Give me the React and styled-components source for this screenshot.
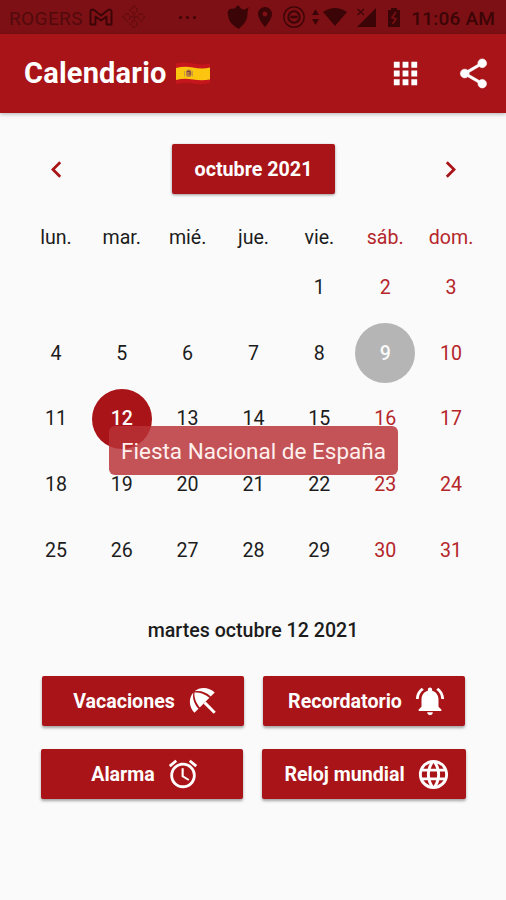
import React from 'react';
import styled, { createGlobalStyle } from 'styled-components';
import {
  MdApps,
  MdShare,
  MdChevronLeft,
  MdChevronRight,
  MdNotificationsActive,
  MdAccessAlarm,
  MdLanguage,
  MdPlace
} from 'react-icons/md';

const red = '#a91418';
const statusInk = '#3b0507';

const GlobalStyle = createGlobalStyle`
  * { box-sizing: border-box; }
  body {
    margin: 0;
    background: #fafafa;
    font-family: Roboto, "Liberation Sans", sans-serif;
  }
`;

const Screen = styled.div`
  display: flex;
  flex-direction: column;
  width: 506px;
  height: 900px;
  overflow: hidden;
  background: #fafafa;
  color: #1c1c1c;
`;

const StatusBar = styled.div`
  display: flex;
  align-items: center;
  height: 34px;
  padding: 0 11px 0 9px;
  background: #7d1014;
  color: ${statusInk};
  svg { display: block; flex: none; }
`;

const Carrier = styled.span`
  flex: none;
  width: 80px;
  padding-top: 2px;
  font-size: 19px;
  letter-spacing: 0.4px;
  color: #520a0d;
`;

const Dots = styled.span`
  display: flex;
  gap: 4px;
  margin-left: 33px;
  i {
    width: 3px;
    height: 3px;
    border-radius: 50%;
    background: ${statusInk};
  }
`;

const Clock = styled.span`
  margin-left: auto;
  padding-top: 2px;
  font-size: 19px;
  font-weight: 500;
  letter-spacing: 0.2px;
  white-space: nowrap;
`;

const SystemIcons = styled.div`
  display: flex;
  flex: none;
  align-items: center;
  margin-left: 30px;
`;

const Gap = styled.span`
  flex: none;
  width: ${props => props.$size}px;
`;

const AppBar = styled.header`
  display: flex;
  align-items: center;
  flex: none;
  height: 79px;
  padding: 0 15.5px 0 24px;
  background: ${red};
  color: #fff;
  box-shadow: 0 1px 4px rgba(0, 0, 0, 0.3);
  svg { display: block; }
`;

const Title = styled.h1`
  margin: 0 8px 2px 0;
  font-size: 29px;
  font-weight: 700;
  letter-spacing: 0.2px;
`;

const Actions = styled.div`
  display: flex;
  align-items: center;
  gap: 32.5px;
  margin-left: auto;
`;

const ShareIcon = styled(MdShare)`
  stroke-width: 0.4;
  path[fill="none"] { stroke: none; }
`;

const MonthBar = styled.div`
  display: flex;
  align-items: center;
  justify-content: space-between;
  height: 50px;
  margin: 31px 39px 0 40px;
  color: ${red};
`;

const MonthButton = styled.div`
  display: flex;
  align-items: center;
  justify-content: center;
  width: 163px;
  height: 50px;
  border-radius: 2px;
  background: ${red};
  color: #fff;
  font-size: 19.7px;
  font-weight: 700;
  box-shadow: 0 1px 3px rgba(0, 0, 0, 0.4);
`;

const Calendar = styled.div`
  position: relative;
  display: grid;
  grid-template-columns: repeat(7, 1fr);
  grid-template-rows: 34.4px repeat(5, 65.8px);
  width: 461px;
  margin: 26px 0 0 23px;
`;

const Weekday = styled.div`
  display: flex;
  align-items: center;
  justify-content: center;
  font-size: 19.6px;
  color: ${props => props.$weekend ? '#b5262b' : 'inherit'};
`;

const Day = styled.div`
  display: flex;
  align-items: center;
  justify-content: center;
  place-self: center;
  width: 60px;
  height: 60px;
  border-radius: 50%;
  font-size: 19.6px;
  font-weight: ${props => props.$fill ? 500 : 400};
  background: ${props => props.$fill || 'transparent'};
  color: ${props => props.$fill ? '#fafafa' : props.$weekend ? '#b5262b' : 'inherit'};
`;

const Tooltip = styled.div`
  position: absolute;
  left: 86px;
  top: 206px;
  display: flex;
  align-items: center;
  justify-content: center;
  width: 289px;
  height: 49px;
  border-radius: 6px;
  background: rgba(184, 50, 55, 0.84);
  color: #fff0ee;
  font-size: 22.5px;
  white-space: nowrap;
`;

const Selected = styled.div`
  margin-top: 33.6px;
  height: 28px;
  line-height: 28px;
  text-align: center;
  font-size: 19.6px;
  font-weight: 500;
`;

const ButtonRow = styled.div`
  display: flex;
  gap: 19px;
  margin: ${props => props.$top}px 0 0 ${props => props.$left}px;
`;

const Button = styled.div`
  display: flex;
  align-items: center;
  justify-content: center;
  gap: 11px;
  width: ${props => props.$width || 202}px;
  height: 50px;
  padding: 1px 0 0 7px;
  border-radius: 2px;
  background: ${red};
  color: #fff;
  font-size: 19.6px;
  font-weight: 700;
  box-shadow: 0 2px 3px rgba(0, 0, 0, 0.35);
`;

const GmailIcon = () => (
  <svg width="24" height="18" viewBox="0 0 24 18" fill="none" stroke="currentColor" strokeWidth="1.9" strokeLinejoin="round">
    <path d="M1.5 3.5Q1.5 1.5 3.7 1.5L5 2L12 7.5L19 2Q22.5 .4 22.5 4V16.5H17.5V8.5L12 12.5L6.5 8.5V16.5H1.5Z" />
  </svg>
);

const PatternIcon = () => (
  <svg width="24" height="24" viewBox="0 0 24 24" fill="none" stroke="#5c0b0f" strokeWidth="1.4" strokeDasharray="1.6 1.6">
    <path d="M12 1L16 5L12 9L8 5ZM12 15L16 19L12 23L8 19ZM1 12L5 8L9 12L5 16ZM15 12L19 8L23 12L19 16ZM12 9V15M9 12H15" />
  </svg>
);

const ShieldIcon = () => (
  <svg width="24" height="26" viewBox="0 0 24 26" fill="currentColor">
    <path d="M12 1L15.5 5L19 5.5L23 3C21 7 22 10 21 14C19.5 19 16 22 12.5 25C8 22 4 19 2.5 14L1.5 8L3.5 5L8.5 4.5Z" />
  </svg>
);

const DndIcon = () => (
  <svg width="24" height="24" viewBox="0 0 24 24" fill="none" stroke="currentColor">
    <circle cx="12" cy="12" r="10.2" strokeWidth="1.3" />
    <circle cx="12" cy="12" r="5.7" strokeWidth="2" />
    <path d="M8.5 12H15.5" strokeWidth="2.6" />
  </svg>
);

const WifiIcon = () => (
  <svg width="37" height="22" viewBox="0 0 37 22" fill="currentColor">
    <path d="M4.5 3L8 9H1ZM1 13H8L4.5 19ZM12 6Q24 -2 36 6L24 20Z" />
  </svg>
);

const SignalIcon = () => (
  <svg width="21" height="21" viewBox="0 0 21 21" fill="currentColor">
    <path d="M20 1V20H1Z" />
    <path d="M1.5 2L8 8M8 2L1.5 8" stroke="currentColor" strokeWidth="1.2" />
  </svg>
);

const BatteryIcon = () => (
  <svg width="14" height="21" viewBox="0 0 14 21" fill="currentColor">
    <path d="M4 1H10V3H13V20H1V3H4Z" />
    <path d="M9 5L5 10.5L9 12L5.5 17" stroke="#7d1014" strokeWidth="1.6" fill="none" />
  </svg>
);

const SpainFlag = () => (
  <svg width="36" height="26" viewBox="0 0 36 26">
    <path d="M1 2.5Q9 .5 18 2.5Q27 4.5 35 2.5V22Q27 24 18 22.5Q9 21 1 23Z" fill="#c5161d" />
    <path d="M1 7Q9 5 18 6.5Q27 8.5 35 6.5V18.5Q27 20 18 18.5Q9 17 1 19Z" fill="#fcc510" />
    <rect x="11" y="8.5" width="5.5" height="7.5" rx="2.5" fill="#b77b43" />
    <path d="M9.5 10V15.5M17.5 10V15.5" stroke="#c99a3c" />
    <path d="M12 10.5H15V14" stroke="#70413b" fill="none" />
  </svg>
);

const UmbrellaIcon = () => (
  <svg width="34" height="34" viewBox="0 0 24 24" fill="currentColor">
    <path d="M12.4 13.9L13.9 12.4L21 19.57L19.57 21Z" />
    <path d="M17.42 8.83L20.28 5.97C16.33 2.02 9.93 1.6 5.98 5.2C9.91 4.4 14.29 5.7 17.42 8.83Z" />
    <path d="M5.2 5.98C1.6 9.93 2.02 16.33 5.97 20.28L8.83 17.42C5.7 14.29 4.4 9.91 5.2 5.98Z" />
    <path d="M6 6C5.6 8.9 6.8 13.1 9.7 16.55L16.55 9.7C13.1 6.8 8.9 5.6 6 6Z" />
  </svg>
);

const weekdays = ['lun.', 'mar.', 'mié.', 'jue.', 'vie.', 'sáb.', 'dom.'];
const days = Array.from({ length: 31 }, (_, i) => i + 1);
const fills = { 9: '#b5b5b5', 12: red };

// October 2021 starts on a Friday
const firstColumn = 5;
const isWeekend = day => (day + firstColumn - 2) % 7 > 4;

const FirstDay = styled(Day)`
  grid-column-start: ${firstColumn};
`;

const App = () => {
  return (
    <Screen>
      <GlobalStyle />
      <StatusBar>
        <Carrier>ROGERS</Carrier>
        <GmailIcon />
        <Gap $size={9} />
        <PatternIcon />
        <Dots><i /><i /><i /></Dots>
        <SystemIcons>
          <ShieldIcon />
          <Gap $size={3} />
          <MdPlace size={24} />
          <Gap $size={5} />
          <DndIcon />
          <Gap $size={5} />
          <WifiIcon />
          <Gap $size={8} />
          <SignalIcon />
          <Gap $size={10} />
          <BatteryIcon />
        </SystemIcons>
        <Clock>11:06 AM</Clock>
      </StatusBar>

      <AppBar>
        <Title>Calendario</Title>
        <SpainFlag />
        <Actions>
          <MdApps size={35} />
          <ShareIcon size={35} />
        </Actions>
      </AppBar>

      <MonthBar>
        <MdChevronLeft size={33} />
        <MonthButton>octubre 2021</MonthButton>
        <MdChevronRight size={33} />
      </MonthBar>

      <Calendar>
        {weekdays.map((name, i) => (
          <Weekday key={name} $weekend={i > 4}>{name}</Weekday>
        ))}
        {days.map(day => {
          const Cell = day === 1 ? FirstDay : Day;
          return (
            <Cell key={day} $fill={fills[day]} $weekend={isWeekend(day)}>
              {day}
            </Cell>
          );
        })}
        <Tooltip>Fiesta Nacional de España</Tooltip>
      </Calendar>

      <Selected>martes octubre 12 2021</Selected>

      <ButtonRow $top={31} $left={42}>
        <Button>Vacaciones <UmbrellaIcon /></Button>
        <Button>Recordatorio <MdNotificationsActive size={34} /></Button>
      </ButtonRow>
      <ButtonRow $top={23} $left={41}>
        <Button>Alarma <MdAccessAlarm size={34} /></Button>
        <Button $width={204}>Reloj mundial <MdLanguage size={35} /></Button>
      </ButtonRow>
    </Screen>
  );
};

export default App;
